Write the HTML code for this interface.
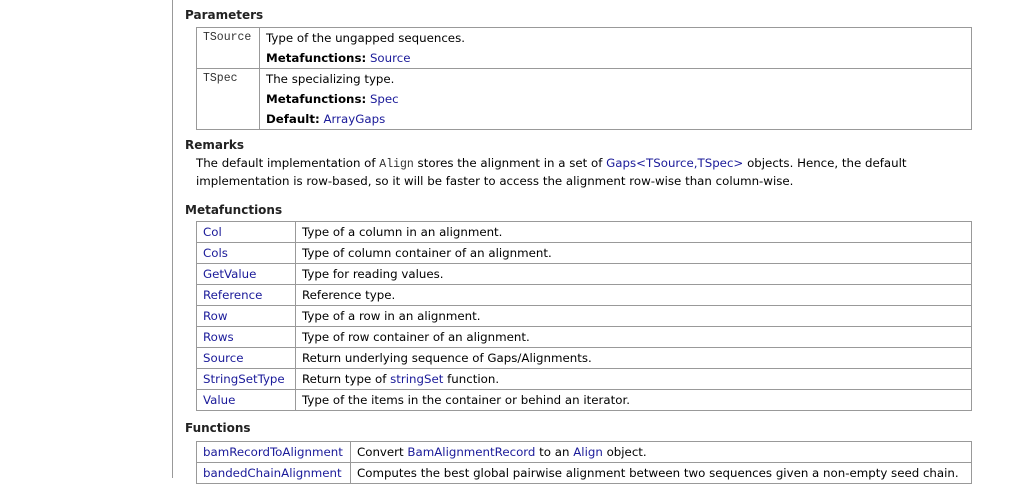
<!DOCTYPE html>
<html><head><meta charset="utf-8"><style>
body{margin:0;width:1009px;height:478px;overflow:hidden;background:#fff;font-family:"DejaVu Sans",Verdana,sans-serif;font-size:11.8px;color:#000;position:relative}
.vl{position:absolute;left:172px;top:0;width:1px;height:478px;background:#999}
h3{position:absolute;left:185px;margin:0;font-size:12px;font-weight:bold;color:#222}
a{color:#1a1a99;text-decoration:none}
table{position:absolute;left:196px;width:776px;border-collapse:collapse}
td{border:1px solid #999;padding:0 6px;vertical-align:top;height:20px;line-height:20px;white-space:nowrap}
.mono{font-family:"Liberation Mono",monospace;font-size:11.5px;color:#333}
.p{position:absolute;left:196px;line-height:17px;margin:0}
</style></head><body>
<div class="vl"></div>
<h3 style="top:8px">Parameters</h3>
<table style="top:27px">
<tr><td class="mono" style="width:50px;height:40px">TSource</td><td style="height:40px">Type of the ungapped sequences.<br><b>Metafunctions:</b> <a>Source</a></td></tr>
<tr><td class="mono" style="height:59px">TSpec</td><td>The specializing type.<br><b>Metafunctions:</b> <a>Spec</a><br><b>Default:</b> <a>ArrayGaps</a></td></tr>
</table>
<h3 style="top:138px">Remarks</h3>
<p class="p" style="top:155px">The default implementation of <span class="mono">Align</span> stores the alignment in a set of <a>Gaps&lt;TSource,TSpec&gt;</a> objects. Hence, the default<br>implementation is row-based, so it will be faster to access the alignment row-wise than column-wise.</p>
<h3 style="top:203px">Metafunctions</h3>
<table style="top:221px">
<tr><td style="width:86px"><a>Col</a></td><td>Type of a column in an alignment.</td></tr>
<tr><td><a>Cols</a></td><td>Type of column container of an alignment.</td></tr>
<tr><td><a>GetValue</a></td><td>Type for reading values.</td></tr>
<tr><td><a>Reference</a></td><td>Reference type.</td></tr>
<tr><td><a>Row</a></td><td>Type of a row in an alignment.</td></tr>
<tr><td><a>Rows</a></td><td>Type of row container of an alignment.</td></tr>
<tr><td><a>Source</a></td><td>Return underlying sequence of Gaps/Alignments.</td></tr>
<tr><td><a>StringSetType</a></td><td>Return type of <a>stringSet</a> function.</td></tr>
<tr><td><a>Value</a></td><td>Type of the items in the container or behind an iterator.</td></tr>
</table>
<h3 style="top:421px">Functions</h3>
<table style="top:441px">
<tr><td style="width:141px"><a>bamRecordToAlignment</a></td><td>Convert <a>BamAlignmentRecord</a> to an <a>Align</a> object.</td></tr>
<tr><td><a>bandedChainAlignment</a></td><td>Computes the best global pairwise alignment between two sequences given a non-empty seed chain.</td></tr>
</table>
</body></html>
